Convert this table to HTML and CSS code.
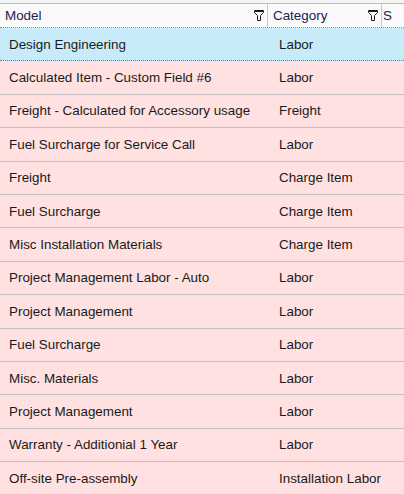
FILE: index.html
```html
<!DOCTYPE html>
<html>
<head>
<meta charset="utf-8">
<link rel="stylesheet" href="styles.css">
</head>
<body>
<div class="grid">
  <div class="top"></div>
  <div class="head">
    <div class="hcell c1"><span class="htext">Model</span><svg class="filter" viewBox="0 0 10 11" width="10" height="11"><path d="M0.5 0.5 H9.5 V2.5 L6.5 5.5 V10.5 H3.5 V5.5 L0.5 2.5 Z" fill="none" stroke="#1a1a1a" stroke-width="1"/><path d="M0.5 1.5 H9.5" stroke="#1a1a1a" stroke-width="1"/></svg></div>
    <div class="hcell c2"><span class="htext">Category</span><svg class="filter" viewBox="0 0 10 11" width="10" height="11"><path d="M0.5 0.5 H9.5 V2.5 L6.5 5.5 V10.5 H3.5 V5.5 L0.5 2.5 Z" fill="none" stroke="#1a1a1a" stroke-width="1"/><path d="M0.5 1.5 H9.5" stroke="#1a1a1a" stroke-width="1"/></svg></div>
    <div class="hcell c3"><span class="htext">S</span></div>
  </div>
  <div class="row sel"><div class="cell c1">Design Engineering</div><div class="cell c2">Labor</div><div class="cell c3"></div></div>
  <div class="row"><div class="cell c1">Calculated Item - Custom Field #6</div><div class="cell c2">Labor</div><div class="cell c3"></div></div>
  <div class="row"><div class="cell c1">Freight - Calculated for Accessory usage</div><div class="cell c2">Freight</div><div class="cell c3"></div></div>
  <div class="row"><div class="cell c1">Fuel Surcharge for Service Call</div><div class="cell c2">Labor</div><div class="cell c3"></div></div>
  <div class="row"><div class="cell c1">Freight</div><div class="cell c2">Charge Item</div><div class="cell c3"></div></div>
  <div class="row"><div class="cell c1">Fuel Surcharge</div><div class="cell c2">Charge Item</div><div class="cell c3"></div></div>
  <div class="row"><div class="cell c1">Misc Installation Materials</div><div class="cell c2">Charge Item</div><div class="cell c3"></div></div>
  <div class="row"><div class="cell c1">Project Management Labor - Auto</div><div class="cell c2">Labor</div><div class="cell c3"></div></div>
  <div class="row"><div class="cell c1">Project Management</div><div class="cell c2">Labor</div><div class="cell c3"></div></div>
  <div class="row"><div class="cell c1">Fuel Surcharge</div><div class="cell c2">Labor</div><div class="cell c3"></div></div>
  <div class="row"><div class="cell c1">Misc. Materials</div><div class="cell c2">Labor</div><div class="cell c3"></div></div>
  <div class="row"><div class="cell c1">Project Management</div><div class="cell c2">Labor</div><div class="cell c3"></div></div>
  <div class="row"><div class="cell c1">Warranty - Additionial 1 Year</div><div class="cell c2">Labor</div><div class="cell c3"></div></div>
  <div class="row"><div class="cell c1">Off-site Pre-assembly</div><div class="cell c2">Installation Labor</div><div class="cell c3"></div></div>
</div>
</body>
</html>
```
FILE: styles.css
```css
html, body {
  margin: 0;
  padding: 0;
  background: #ffe1e1;
  overflow: hidden;
}
.grid {
  width: 404px;
  height: 494px;
  overflow: hidden;
  font-family: "Liberation Sans", Arial, sans-serif;
  font-size: 13.4px;
  color: #1a1a1a;
}
.top {
  height: 3px;
  background: #f4f4f4;
}
.head {
  display: flex;
  height: 23px;
  border-top: 1px solid #bdbdbd;
  border-bottom: 1px dotted #8a8a8a;
  background: #fafafa;
}
.hcell {
  display: flex;
  align-items: center;
  box-sizing: border-box;
  border-right: 1px solid #c8c8c8;
  padding-left: 5px;
  color: #1c2150;
  font-size: 13.4px;
}
.hcell .htext {
  flex: 1;
  white-space: nowrap;
  overflow: hidden;
}
.filter {
  margin-right: 3px;
  flex: none;
}
.c1 { width: 268px; flex: none; }
.c2 { width: 114px; flex: none; }
.c3 { flex: 1; border-right: none; }
.hcell.c3 { padding-left: 1px; }
.row {
  display: flex;
  height: 32.4px;
  border-bottom: 1px solid #c4c0c0;
  align-items: center;
}
.row.sel {
  background: #c8ebfa;
  border-bottom: 1px dotted #7a7a7a;
}
.cell {
  box-sizing: border-box;
  white-space: nowrap;
  overflow: hidden;
}
.cell.c1 { padding-left: 9px; }
.cell.c2 { padding-left: 11px; }
```
